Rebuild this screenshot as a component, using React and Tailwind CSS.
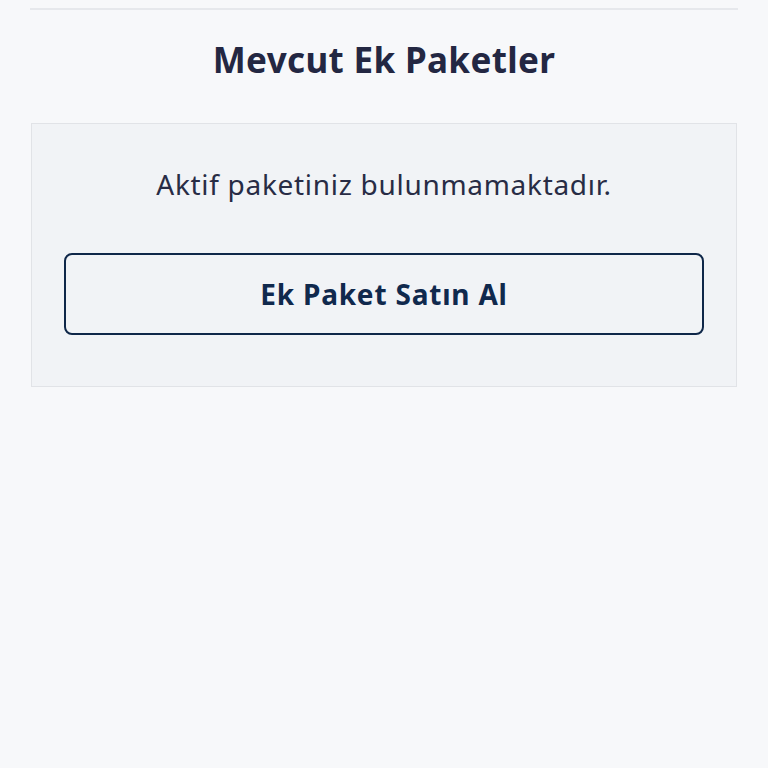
export default function App() {
  return (
    <div
      className="min-h-[768px] w-full bg-[#f7f8fa] px-[30px] pt-[8px]"
      style={{ fontFamily: "'Noto Sans', sans-serif" }}
    >
      <div className="h-[2px] bg-[#e6e8ec]" />

      <h1 className="mt-[28px] text-center text-[35px] font-bold leading-[44px] tracking-[0.35px] text-[#232742]">
        Mevcut Ek Paketler
      </h1>

      <div className="mt-[41px] ml-[1px] mr-[1px] border border-[#e1e3e7] bg-[#f1f3f6] px-[32px] pt-[40px] pb-[51px]">
        <p className="text-center text-[28px] leading-[40px] tracking-[0.7px] text-[#282c45]">
          Aktif paketiniz bulunmamaktadır.
        </p>
        <button
          type="button"
          className="mt-[49px] flex h-[82px] w-full items-center justify-center rounded-[8px] border-2 border-[#0f2749] text-[28px] font-bold tracking-[0.8px] text-[#10294d]"
        >
          Ek Paket Satın Al
        </button>
      </div>
    </div>
  );
}
